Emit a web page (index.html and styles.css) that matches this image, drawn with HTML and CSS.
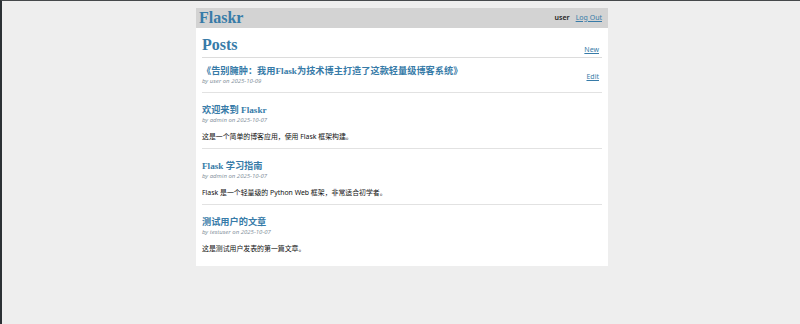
FILE: index.html
```html
<!DOCTYPE html>
<html lang="zh">
<head>
<meta charset="utf-8">
<title>Posts - Flaskr</title>
<link rel="stylesheet" href="styles.css">
</head>
<body>
<nav class="topnav">
  <h1 class="brand"><a href="#">Flaskr</a></h1>
  <ul class="navlist">
    <li><span class="navuser">user</span></li>
    <li><a class="navlink" href="#">Log Out</a></li>
  </ul>
</nav>
<section class="content">
  <header class="page-header">
    <h1 class="page-title">Posts</h1>
    <a class="action" href="#">New</a>
  </header>

  <article class="post">
    <header class="post-header">
      <div class="post-meta">
        <h1 class="post-title">《告别臃肿：我用Flask为技术博主打造了这款轻量级博客系统》</h1>
        <div class="about">by user on 2025-10-09</div>
      </div>
      <a class="action edit" href="#">Edit</a>
    </header>
  </article>
  <hr class="sep">

  <article class="post">
    <header class="post-header">
      <div class="post-meta">
        <h1 class="post-title">欢迎来到 Flaskr</h1>
        <div class="about">by admin on 2025-10-07</div>
      </div>
    </header>
    <p class="body">这是一个简单的博客应用，使用 Flask 框架构建。</p>
  </article>
  <hr class="sep">

  <article class="post">
    <header class="post-header">
      <div class="post-meta">
        <h1 class="post-title">Flask 学习指南</h1>
        <div class="about">by admin on 2025-10-07</div>
      </div>
    </header>
    <p class="body">Flask 是一个轻量级的 Python Web 框架，非常适合初学者。</p>
  </article>
  <hr class="sep">

  <article class="post">
    <header class="post-header">
      <div class="post-meta">
        <h1 class="post-title">测试用户的文章</h1>
        <div class="about">by testuser on 2025-10-07</div>
      </div>
    </header>
    <p class="body">这是测试用户发表的第一篇文章。</p>
  </article>
</section>
</body>
</html>
```
FILE: styles.css
```css
html {
  margin: 0;
  background: #eeeeee;
  border-top: 1px solid #45484b;
  border-left: 2px solid #2b3034;
  padding: 7px 8px 8px 10px;
  min-height: 100vh;
  box-sizing: border-box;
  font-family: "Noto Sans", "Noto Sans CJK SC", sans-serif;
  font-size: 8px;
}

body {
  margin: 0 auto;
  width: 412px;
  background: #ffffff;
}

a {
  color: #377ba8;
}

.topnav {
  background: #d3d3d3;
  display: flex;
  align-items: center;
  height: 20px;
  padding: 0 3px;
}

.brand {
  flex: auto;
  margin: 0;
  font-family: "Liberation Serif", "Noto Sans CJK SC", serif;
  font-size: 16px;
  line-height: 20px;
}

.brand a {
  text-decoration: none;
  color: #377ba8;
}

.navlist {
  display: flex;
  list-style: none;
  margin: 0;
  padding: 0;
  font-size: 7px;
  line-height: 10px;
}

.navuser,
.navlink {
  display: block;
  padding: 0 3px;
}

.navuser {
  color: #222;
  font-weight: 600;
}

.content {
  padding: 0 6px 13px;
}

.page-header {
  display: flex;
  align-items: flex-end;
  border-bottom: 1px solid #dcdcdc;
}

.page-title {
  flex: auto;
  margin: 7.6px 0 3.4px;
  font-family: "Liberation Serif", "Noto Sans CJK SC", serif;
  font-size: 16px;
  line-height: 18px;
  color: #377ba8;
}

.action {
  display: block;
  font-size: 7px;
  line-height: 10px;
  padding: 0 3px 2px;
}

.post-header {
  display: flex;
  align-items: flex-end;
}

.post-meta {
  flex: auto;
}

.post-title {
  margin: 8.5px 0 0;
  font-family: "Liberation Serif", "Noto Sans CJK SC", serif;
  font-size: 9.2px;
  line-height: 11px;
  color: #377ba8;
}

.about {
  font-size: 6px;
  line-height: 8px;
  font-style: italic;
  color: #8a96a2;
}

.edit {
  padding-bottom: 3px;
}

.body {
  margin: 9.5px 0 0;
  font-size: 6.9px;
  line-height: 8px;
  color: #111111;
}

.sep {
  border: none;
  border-top: 1px solid #e2e2e2;
  margin: 7px 0 3px;
}
```
